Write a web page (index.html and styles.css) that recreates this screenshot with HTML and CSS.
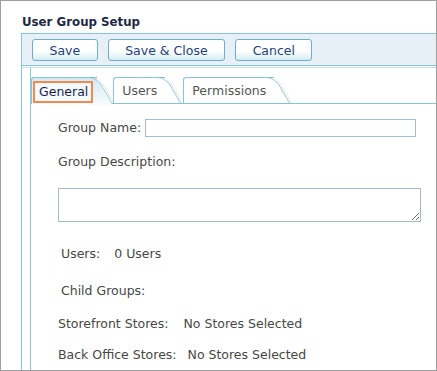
FILE: index.html
```html
<!DOCTYPE html>
<html>
<head>
    <meta charset="UTF-8">
    <title>User Group Setup</title>
    <link rel="stylesheet" href="styles.css">
</head>
<body>
    <div class="window">
        <h1 class="title">User Group Setup</h1>
        <div class="panel">
            <div class="toolbar">
                <button class="btn">Save</button>
                <button class="btn">Save &amp; Close</button>
                <button class="btn">Cancel</button>
            </div>
            <div class="body">
                <div class="content">
                    <div class="tabs">
                        <div class="tab active"><span class="focus">General</span></div>
                        <div class="tab">Users</div>
                        <div class="tab">Permissions</div>
                    </div>
                    <div class="form">
                        <div class="row name-row">
                            <label class="label">Group Name:</label>
                            <input type="text" class="field">
                        </div>
                        <div class="row desc-label">Group Description:</div>
                        <textarea class="area"></textarea>
                        <div class="row users-row indent"><span class="key">Users:</span><span>0 Users</span></div>
                        <div class="row child-row indent">Child Groups:</div>
                        <div class="row store-row"><span class="key">Storefront Stores:</span><span>No Stores Selected</span></div>
                        <div class="row office-row"><span class="key">Back Office Stores:</span><span>No Stores Selected</span></div>
                    </div>
                </div>
            </div>
        </div>
    </div>
</body>
</html>
```

FILE: styles.css
```css
body {
    margin: 0;
    font-family: "DejaVu Sans", Verdana, sans-serif;
    background-color: white;
}

.window {
    width: 437px;
    height: 371px;
    box-sizing: border-box;
    border: 1px solid #9e9e9e;
    overflow: hidden;
    display: flex;
    flex-direction: column;
}

.title {
    margin: 0 0 3px 0;
    padding: 13px 0 0 21px;
    font-size: 11.8px;
    line-height: 16px;
    font-weight: bold;
    color: #1e2a45;
}

.panel {
    flex: 1;
    margin-left: 20px;
    border-left: 1px solid #86c6d5;
    display: flex;
    flex-direction: column;
}

.toolbar {
    height: 31px;
    box-sizing: content-box;
    border-top: 1px solid #86c6d5;
    border-bottom: 1px solid #86c6d5;
    background-color: #e8f0f7;
    padding-left: 10px;
    display: flex;
    align-items: flex-start;
    gap: 10px;
}

.btn {
    margin-top: 5px;
    height: 22px;
    padding: 0 16.5px;
    font-family: "DejaVu Sans", Verdana, sans-serif;
    font-size: 12.5px;
    color: #24427a;
    border: 1px solid #6eaecb;
    border-radius: 3px;
    background: linear-gradient(#ffffff 0%, #ffffff 55%, #d3edf3 100%);
    cursor: pointer;
}

.body {
    flex: 1;
    margin-top: 1px;
    border-top: 1px solid #c6e4ec;
    padding-left: 8px;
    display: flex;
}

.content {
    flex: 1;
    border-left: 1px solid #86c6d5;
    display: flex;
    flex-direction: column;
}

.tabs {
    margin-top: 9px;
    display: flex;
    align-items: flex-end;
    border-bottom: 1px solid #86c6d5;
    height: 26px;
}

.tab {
    position: relative;
    z-index: 0;
    height: 25px;
    border-top: 1px solid #86c6d5;
    border-left: 1px solid #86c6d5;
    border-top-left-radius: 3px;
    padding: 0 8px;
    margin-right: 18px;
    font-size: 12.5px;
    line-height: 25px;
    color: #555555;
    background-color: white;
}

.tab::after {
    content: "";
    position: absolute;
    z-index: -1;
    top: -1px;
    bottom: 0;
    right: -16px;
    width: 26px;
    border-top: 1px solid #86c6d5;
    border-right: 1px solid #86c6d5;
    border-top-right-radius: 9px;
    background: inherit;
    transform: skewX(30deg);
    transform-origin: bottom left;
    box-shadow: 2px 0 2px rgba(0, 0, 0, 0.08);
}

.tab.active {
    padding: 0 4px 0 1px;
    margin-right: 16px;
    margin-bottom: -1px;
    height: 26px;
    background: linear-gradient(#d2e9f3, #f6fbfd);
}

.focus {
    display: inline-block;
    margin-top: 3px;
    height: 18px;
    line-height: 18px;
    padding: 0 3px 0 4px;
    border: 2px solid #f28a4f;
    color: #1b1f4e;
    background-color: #f4f9fc;
}

.form {
    padding-left: 27px;
    font-size: 12.5px;
    line-height: 16px;
    color: #474747;
    display: flex;
    flex-direction: column;
    align-items: flex-start;
}

.row {
    display: flex;
    align-items: center;
}

.indent {
    padding-left: 3px;
}

.name-row {
    margin-top: 15px;
    gap: 4px;
}

.field {
    width: 271px;
    height: 18px;
    box-sizing: border-box;
    border: 1px solid #a6bacb;
    margin: 0;
    padding: 0 2px;
}

.desc-label {
    margin-top: 17px;
}

.area {
    margin-top: 18px;
    width: 363px;
    height: 34px;
    box-sizing: border-box;
    border: 1px solid #a6bacb;
    padding: 2px;
}

.users-row {
    margin-top: 24px;
}

.child-row {
    margin-top: 21px;
}

.store-row {
    margin-top: 17px;
}

.office-row {
    margin-top: 15px;
}

.key {
    margin-right: 14px;
}

.store-row .key {
    margin-right: 15px;
}

.office-row .key {
    margin-right: 11px;
}
```
